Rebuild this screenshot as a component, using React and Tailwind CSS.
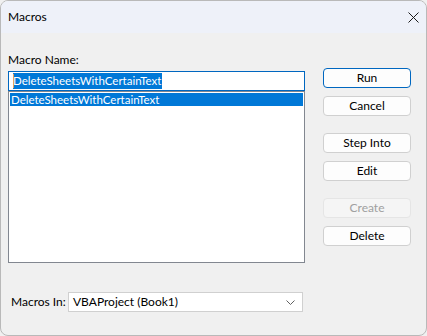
import React from 'react';

const font = { fontFamily: '"Segoe UI", Lato, "Liberation Sans", sans-serif' };

const Btn = ({ label, primary, disabled }) => (
  <button
    className={
      'w-[88px] h-[20px] rounded-[4px] border text-[12px] leading-none flex items-center justify-center ' +
      (primary
        ? 'bg-[#fdfdfd] border-[#0067c0] text-black'
        : disabled
        ? 'bg-[#f5f5f5] border-[#e5e5e5] text-[#a0a0a0]'
        : 'bg-[#fdfdfd] border-[#d0d0d0] text-black')
    }
  >
    {label}
  </button>
);

const App = () => {
  return (
    <div className="w-[427px] h-[336px] bg-[#f0f0f0]" style={font}>
      <div className="w-[427px] h-[336px] rounded-[8px] border border-[#b9b9b9] overflow-hidden flex flex-col bg-[#f0f0f0]">
        <div className="h-[32px] bg-[#eef1f9] flex items-center justify-between pl-[7px] pr-[8px] shrink-0">
          <span className="text-[12px] text-black">Macros</span>
          <svg width="11" height="11" viewBox="0 0 11 11" className="mr-[-1px]">
            <path d="M0.5 0.5 L10.5 10.5 M10.5 0.5 L0.5 10.5" stroke="#1a1a1a" strokeWidth="1" />
          </svg>
        </div>

        <div className="flex flex-row pt-[19px]">
          <div className="flex flex-col pl-[7px] w-[305px]">
            <div className="text-[12px] leading-[16px] text-black">Macro Name:</div>
            <div className="mt-[3px] h-[20px] w-[297px] border border-[#0067c0] bg-white flex items-center pl-[4px]">
              <span className="relative bg-[#0078d7] text-white text-[11.5px] leading-[16px] pr-[1px]">
                <span className="absolute left-0 top-[1px] w-[1px] h-[14px] bg-[#e8a060]" />
                DeleteSheetsWithCertainText
              </span>
            </div>
            <div className="h-[172px] w-[297px] border border-[#828790] bg-white p-[1px]">
              <div className="h-[13px] bg-[#0078d7] text-white text-[11.5px] leading-[13px] pl-[1px]">
                DeleteSheetsWithCertainText
              </div>
            </div>
            <div className="mt-[29px] flex items-center">
              <span className="w-[60px] pl-[3px] text-[12px] text-black">Macros In:</span>
              <div className="w-[235px] h-[20px] border border-[#d0d0d0] bg-white flex items-center justify-between pl-[4px] pr-[7px]">
                <span className="text-[12px] text-black">VBAProject (Book1)</span>
                <svg width="9" height="5" viewBox="0 0 9 5">
                  <path d="M0.5 0.5 L4.5 4.5 L8.5 0.5" stroke="#606060" strokeWidth="1" fill="none" />
                </svg>
              </div>
            </div>
          </div>

          <div className="flex flex-col pl-[17px] pt-[16px]">
            <Btn label="Run" primary />
            <div className="mt-[8px]"><Btn label="Cancel" /></div>
            <div className="mt-[17px]"><Btn label="Step Into" /></div>
            <div className="mt-[8px]"><Btn label="Edit" /></div>
            <div className="mt-[17px]"><Btn label="Create" disabled /></div>
            <div className="mt-[8px]"><Btn label="Delete" /></div>
          </div>
        </div>
      </div>
    </div>
  );
};

export default App;
